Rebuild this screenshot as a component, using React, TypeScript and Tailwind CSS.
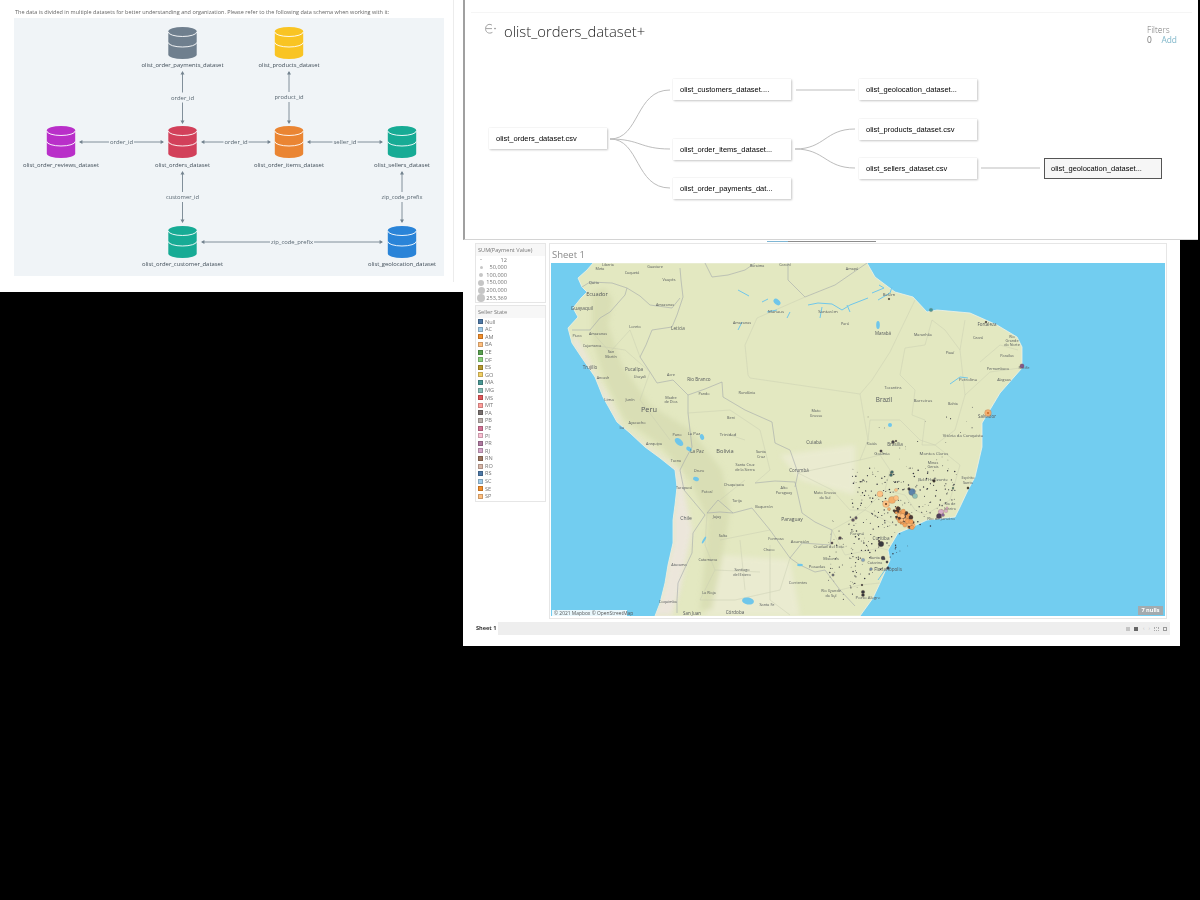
import React from "react";

const F = { fontFamily: '"Open Sans", "Liberation Sans", sans-serif' };

function Cyl({ cx, y, c }: { cx: number; y: number; c: string }) {
  const l = cx - 14.2, r = cx + 14.2;
  return (
    <g>
      <path d={`M${l} ${y + 4.5}A14.2 4.5 0 0 1 ${r} ${y + 4.5}V${y + 27.5}A14.2 4.5 0 0 1 ${l} ${y + 27.5}Z`} fill={c} />
      <path d={`M${l} ${y + 5}A14.2 4.5 0 0 0 ${r} ${y + 5}`} fill="none" stroke="#fff" strokeWidth="0.9" />
      <path d={`M${l} ${y + 15.5}A14.2 4.5 0 0 0 ${r} ${y + 15.5}`} fill="none" stroke="#fff" strokeWidth="0.9" />
    </g>
  );
}

function ArrowV({ x, y1, y2, label, ly, w }: { x: number; y1: number; y2: number; label: string; ly: number; w: number }) {
  return (
    <g>
      <line x1={x} y1={y1} x2={x} y2={y2} stroke="#74838f" strokeWidth="0.9" />
      <path d={`M${x} ${y1 - 1}l-2 3.4h4zM${x} ${y2 + 1}l-2 -3.4h4z`} fill="#74838f" />
      <rect x={x - w / 2 - 1} y={ly - 5} width={w + 2} height={10} fill="#f0f4f7" />
      <text x={x} y={ly + 2} textAnchor="middle" fontSize="6" fill="#56646f" textLength={w} lengthAdjust="spacingAndGlyphs">{label}</text>
    </g>
  );
}

function ArrowH({ y, x1, x2, label, lx, w }: { y: number; x1: number; x2: number; label: string; lx: number; w: number }) {
  return (
    <g>
      <line x1={x1} y1={y} x2={x2} y2={y} stroke="#74838f" strokeWidth="0.9" />
      <path d={`M${x1 - 1} ${y}l3.4 -2v4zM${x2 + 1} ${y}l-3.4 -2v4z`} fill="#74838f" />
      <rect x={lx - w / 2 - 1} y={y - 5} width={w + 2} height={10} fill="#f0f4f7" />
      <text x={lx} y={y + 2} textAnchor="middle" fontSize="6" fill="#56646f" textLength={w} lengthAdjust="spacingAndGlyphs">{label}</text>
    </g>
  );
}

const dbLabels: [number, number, string, number][] = [
  [182.5, 67, "olist_order_payments_dataset", 82],
  [289, 67, "olist_products_dataset", 61],
  [61, 167, "olist_order_reviews_dataset", 76],
  [182.5, 167, "olist_orders_dataset", 55],
  [289, 167, "olist_order_items_dataset", 70],
  [402, 167, "olist_sellers_dataset", 56],
  [182.5, 266, "olist_order_customer_dataset", 81],
  [402, 266, "olist_geolocation_dataset", 68],
];

function Schema() {
  return (
    <svg viewBox="14 18 430 258" className="block w-full h-full blur-[0.35px]" style={F}>
      <Cyl cx={182.5} y={27} c="#6f7f8e" />
      <Cyl cx={289} y={27} c="#f9c423" />
      <Cyl cx={61} y={126} c="#b92fc9" />
      <Cyl cx={182.5} y={126} c="#d2405a" />
      <Cyl cx={289} y={126} c="#ea8533" />
      <Cyl cx={402} y={126} c="#17ab95" />
      <Cyl cx={182.5} y={226} c="#17ab95" />
      <Cyl cx={402} y={226} c="#2a84d8" />
      <ArrowV x={182.5} y1={72} y2={123} label="order_id" ly={97.5} w={23} />
      <ArrowV x={289} y1={72} y2={123} label="product_id" ly={97} w={29} />
      <ArrowV x={182.5} y1={172} y2={222} label="customer_id" ly={197} w={33} />
      <ArrowV x={402} y1={172} y2={222} label="zip_code_prefix" ly={197} w={41} />
      <ArrowH y={142} x1={80} x2={163} label="order_id" lx={121.5} w={23} />
      <ArrowH y={142} x1={202} x2={270} label="order_id" lx={236} w={23} />
      <ArrowH y={142} x1={308} x2={382} label="seller_id" lx={345} w={23} />
      <ArrowH y={242} x1={202} x2={382} label="zip_code_prefix" lx={292} w={42} />
      {dbLabels.map(([x, y, t, w]) => (
        <text key={t} x={x} y={y} textAnchor="middle" fontSize="6" fontWeight="500" fill="#3f4c57" textLength={w} lengthAdjust="spacingAndGlyphs">{t}</text>
      ))}
    </svg>
  );
}

function Node({ t, x, y, active }: { t: string; x: number; y: number; active?: boolean }) {
  return (
    <div
      className={`absolute w-[118px] h-[21px] flex items-center text-[7.5px] text-black whitespace-nowrap overflow-hidden ${active ? "bg-[#f6f6f6] border border-[#555] pl-[6px]" : "bg-white pl-[7px] shadow-[1px_1px_2px_#c8c8c8,0_0_1px_#dddddd]"}`}
      style={{ left: x, top: y, fontFamily: '"Liberation Sans", sans-serif' }}
    >
      {t}
    </div>
  );
}

function DataSource() {
  return (
    <div className="absolute left-[463px] top-0 w-[735px] h-[240px] bg-white border-l-2 border-b border-[#a0a0a0] border-b-[#d4d4d4] blur-[0.3px]">
      <div className="mt-[12px] mx-[6px] border-t border-[#f5f5f5]" />
      <div className="flex items-start pl-[19px] pt-[9px]">
        <div className="w-[20px] flex items-center leading-[20px]">
          <svg width="14" height="14" viewBox="0 0 14 14" fill="none" stroke="#999" strokeWidth="0.9">
            <path d="M8 3.2C5.5 1.4 2 2.6 1.6 6.2 1.2 10 4.6 12.4 8.4 10.4M1.8 6.6H8" />
            <circle cx="11" cy="6.6" r="0.5" fill="#999" />
          </svg>
        </div>
        <div className="text-[14.8px] leading-[19px] font-light text-[#222] whitespace-nowrap" style={F}>olist_orders_dataset+</div>
        <div className="ml-auto mr-[21px] w-[30px] text-[8.4px] leading-[10px] text-[#777] pt-[3px]" style={F}>
          <div className="font-light">Filters</div>
          <div className="flex justify-between">
            <span>0</span>
            <span className="text-[#7fb6c9]">Add</span>
          </div>
        </div>
      </div>
      <svg className="absolute left-0 top-0 w-full h-full pointer-events-none" viewBox="465 0 733 239" fill="none" stroke="#bdbdbd" strokeWidth="1">
        <path d="M610 139C640 139 635 90 670 90M610 139C640 139 640 149 670 149M610 139C640 139 635 188 670 188" />
        <path d="M795 149C825 149 825 129 855 129M795 149C825 149 825 168 855 168" />
        <path d="M796 90H855M981 168H1040" />
      </svg>
      <Node t="olist_orders_dataset.csv" x={24} y={128} />
      <Node t="olist_customers_dataset...." x={208} y={79} />
      <Node t="olist_order_items_dataset..." x={208} y={139} />
      <Node t="olist_order_payments_dat..." x={208} y={178} />
      <Node t="olist_geolocation_dataset..." x={394} y={79} />
      <Node t="olist_products_dataset.csv" x={394} y={119} />
      <Node t="olist_sellers_dataset.csv" x={394} y={158} />
      <Node t="olist_geolocation_dataset..." x={579} y={158} active />
    </div>
  );
}

const sizes: [number, string][] = [[0.6, "12"], [1.5, "50,000"], [2.3, "100,000"], [3, "150,000"], [3.5, "200,000"], [4, "253,369"]];
const states: [string, string][] = [
  ["Null", "#4e79a7"], ["AC", "#a0cbe8"], ["AM", "#f28e2b"], ["BA", "#ffbe7d"], ["CE", "#59a14f"], ["DF", "#8cd17d"],
  ["ES", "#b6992d"], ["GO", "#f1ce63"], ["MA", "#499894"], ["MG", "#86bcb6"], ["MS", "#e15759"], ["MT", "#ff9d9a"],
  ["PA", "#79706e"], ["PB", "#bab0ac"], ["PE", "#d37295"], ["PI", "#fabfd2"], ["PR", "#b07aa1"], ["RJ", "#d4a6c8"],
  ["RN", "#9d7660"], ["RO", "#d7b5a6"], ["RS", "#4e79a7"], ["SC", "#a0cbe8"], ["SE", "#f28e2b"], ["SP", "#ffbe7d"],
];

function Legends() {
  return (
    <div className="w-[71px] flex flex-col gap-[2px] text-[5.6px] text-[#777] blur-[0.35px]" style={F}>
      <div className="h-[60px] border border-[#e6e6e6]">
        <div className="h-[12px] bg-[#f7f7f7] flex items-center pl-[2px] pt-[1px] whitespace-nowrap">SUM(Payment Value)</div>
        {sizes.map(([r, t]) => (
          <div key={t} className="flex items-center h-[7.6px]">
            <div className="w-[10px] flex justify-center">
              <span className="rounded-full bg-[#c6c6c6] shrink-0" style={{ width: r * 2, height: r * 2 }} />
            </div>
            <span className="w-[21px] text-right whitespace-nowrap">{t}</span>
          </div>
        ))}
      </div>
      <div className="h-[197px] border border-[#e6e6e6]">
        <div className="h-[12px] bg-[#f7f7f7] flex items-center pl-[2px]">Seller State</div>
        <div className="pl-[2px]">
          {states.map(([s, c]) => (
            <div key={s} className="flex items-center h-[7.6px] gap-[2px]">
              <span className="w-[5px] h-[5px] border border-[#00000033]" style={{ backgroundColor: c }} />
              <span>{s}</span>
            </div>
          ))}
        </div>
      </div>
    </div>
  );
}

const land = "M593 263L587 270 578 278 582 287 587 292 581 298 573 308 578 317 568 328 572 343 582 358 595 377 603 397 617 422 630 433 645 447 660 458 675 470 677 487 675 505 673 520 673 543 668 565 665 583 660 603 655 616H860L873 598 880 583 890 560 888 550 898 533 910 528 927 520 955 517 960 507 968 490 975 477 982 447 982 423 1000 393 1022 368 1022 347 1017 337 997 325 970 313 937 310 927 312 913 297 895 292 875 277 867 263Z";
const borders = [
  "M680 268L681 280 683 297 677 315 672 327 652 330 646 345 640 357 650 372 657 383 673 380 688 395 705 389 722 382 723 397 745 410 772 422 775 443 790 450 798 473 795 487",
  "M755 483L775 481 795 482 802 513 815 522 832 530 830 545 802 543 790 558 770 530 752 508 733 513 720 512 707 513",
  "M705 515L693 533 692 553 684 570 678 583 677 600 677 613",
  "M688 395L688 413 692 447 685 460 680 470 684 490 705 515",
  "M705 263L712 277 728 275 745 270 755 263M788 263L788 280 805 297 835 285 867 263",
  "M572 330L590 330 600 318 610 312 625 295 627 288 612 283 590 282 582 287M627 288L640 296 650 305 672 308 680 298",
  "M707 513L718 500 733 513M790 558L800 565 815 572 825 570 840 590 855 606",
];
const states2 = [
  "M745 345L757 318 805 297M745 345L748 375 750 378 798 385 860 394M798 473L860 460 868 440 860 394M860 394L872 380 890 352 915 300",
  "M905 348L900 375 915 390 912 415 925 420 922 445 935 445 955 430 965 395 960 350 945 330 932 320 925 345 905 348",
  "M960 350L965 320M980 362L1000 345 1018 350M965 395L990 372 1020 368",
  "M860 460L880 455 890 470 885 490 865 510 850 510 832 490 798 473M885 490L905 495 915 510 925 515 950 500 960 465 935 445 920 440 900 420 870 420 868 440",
  "M832 530L850 520 865 510 895 525M845 555L880 548 888 550M845 555L832 530M840 590L860 585 880 583",
  "M592 345L625 350 650 372 640 400 655 420 670 440M590 330L610 352 630 330 640 357M688 413L730 410 760 430 770 470 755 483M730 435L745 440M720 500L745 480",
  "M707 513L705 545 715 570 700 600 735 600 780 590 790 558M720 540L770 530M740 540L745 590M770 545L770 600 790 615M715 570L760 572",
];
const rivers = [
  "M808 305L818 303 832 304 842 310 850 305 868 298M822 307L820 318M847 305L850 312",
  "M742 322L738 330M767 312L777 310M790 312L787 318M738 290L749 296M762 302L768 299",
  "M872 293L884 288 879 285M878 300L890 293 892 287",
  "M950 384L960 377 968 378",
  "M885 570L878 580",
];
const lakes: [number, number, number, number, number][] = [
  [679, 442, 5, 3, 40], [689, 449, 3, 2, 30], [777, 302, 4, 2.5, 40], [702, 437, 2, 3, -20], [748, 601, 6, 3.5, 10], [696, 479, 3, 2, 20], [878, 325, 1.8, 4, 0], [890, 425, 2, 2, 0], [800, 565, 3, 1.2, 0], [704, 540, 1, 4, 30],
];

type L = [number, number, string, number?];
const names: L[] = [
  [600, 270, "Meta"], [608, 266, "Liberia"], [632, 274, "Caquetá"], [655, 268, "Guaviare"], [669, 281, "Vaupés"], [594, 284, "Quito", 4.8], [597, 296, "Ecuador", 6.6], [582, 310, "Guayaquil", 5.6],
  [665, 306, "Amazonas"], [635, 328, "Loreto"], [678, 330, "Leticia", 5.4], [742, 323.5, "Amazonas"], [776, 312.5, "Manaus", 5], [828, 312.5, "Santarém", 5], [845, 324.5, "Pará"], [757, 267, "Roraima"], [785, 266, "Caroní"], [852, 270, "Amapá"],
  [577, 337, "Piura"], [598, 335, "Amazonas"], [592, 347, "Cajamarca"], [611, 352.5, "San"], [611, 357.5, "Martín"], [590, 369, "Trujillo", 5.4], [634, 371, "Pucallpa", 5.4], [640, 378, "Ucayali"], [603, 379, "Ancash"],
  [671, 376, "Acre"], [699, 381, "Rio Branco", 5.4], [747, 394, "Rondônia"], [704, 395, "Pando"], [671, 398.5, "Madre"], [671, 402.5, "de Dios"], [630, 401, "Junín"], [609, 401, "Lima", 5], [649, 411.5, "Peru", 8.6],
  [637, 424, "Ayacucho"], [622, 429, "Ica"], [677, 436, "Puno"], [694, 435, "La Paz", 5], [728, 436, "Trinidad", 5], [731, 419, "Beni"], [816, 412, "Mato"], [816, 416.5, "Grosso"], [814, 444, "Cuiabá", 5.6], [725, 453, "Bolivia", 6.6], [697, 453, "La Paz", 5.4],
  [761, 452.5, "Santa"], [761, 457.5, "Cruz"], [745, 466, "Santa Cruz"], [745, 471, "de la Sierra"], [654, 445, "Arequipa"], [676, 462, "Tacna"], [699, 472, "Oruro"], [799, 472, "Corumbá", 5.2],
  [684, 489, "Tarapacá"], [707, 493, "Potosí"], [734, 486, "Chuquisaca"], [737, 502, "Tarija"], [764, 508, "Boquerón"], [784, 489, "Alto"], [784, 493.5, "Paraguay"], [825, 494, "Mato Grosso"], [825, 498.5, "do Sul"], [792, 521, "Paraguay", 5.8],
  [717, 518, "Jujuy"], [686, 520, "Chile", 5.8], [723, 537, "Salta"], [776, 540, "Formosa"], [800, 543, "Asunción", 5], [829, 548, "Ciudad del Este", 5], [857, 535, "Paraná", 5], [769, 551, "Chaco"], [831, 560, "Misiones"], [708, 561, "Catamarca"], [679, 566, "Atacama"], [817, 568, "Posadas", 5],
  [742, 571, "Santiago"], [742, 575.5, "del Estero"], [798, 584, "Corrientes"], [709, 594, "La Rioja"], [831, 592, "Rio Grande"], [831, 596.5, "do Sul"], [668, 603, "Coquimbo"], [767, 606, "Santa Fe"], [735, 614, "Córdoba", 5.4], [692, 615, "San Juan", 5.2],
  [889, 296, "Belém", 5], [923, 336, "Maranhão"], [883, 335, "Marabá", 5.2], [978, 339, "Ceará"], [987, 326, "Fortaleza", 5.2], [1012, 337.5, "Rio"], [1012, 341.5, "Grande"], [1012, 346, "do Norte"], [1007, 357, "Paraíba"], [950, 354, "Piauí"], [998, 370, "Pernambuco"], [1024, 369, "Recife", 4.6], [968, 381, "Petrolina", 5], [1004, 381, "Alagoas"], [893, 389, "Tocantins"], [884, 402, "Brazil", 7.4], [923, 402, "Barreiras", 5], [953, 405, "Bahia"], [987, 418, "Salvador", 5.2], [963, 437, "Vitória da Conquista", 5],
  [872, 445, "Goiás"], [895, 446, "Brasília", 5.4], [882, 455, "Goiânia", 5], [934, 455, "Montes Claros", 5], [933, 463.5, "Minas"], [933, 468, "Gerais"], [933, 481, "Belo Horizonte", 5], [968, 479, "Espírito"], [968, 483.5, "Santo"], [950, 505, "Rio de"], [950, 509.5, "Janeiro"], [881, 540, "Curitiba", 5.4], [875, 559, "Santa"], [875, 563.5, "Catarina"], [888, 571, "Florianópolis", 5.4], [941, 520, "Rio de Janeiro", 5], [868, 599, "Porto Alegre", 5],
];

function rng(seed: number) {
  let s = seed;
  return () => {
    s = (s * 1664525 + 1013904223) % 4294967296;
    return s / 4294967296;
  };
}
const r = rng(7);
const scatter: [number, number, number][] = [];
for (let i = 0; i < 380; i++) {
  const x = 850 + r() * 110;
  const y = 468 + r() * 120;
  if (x + (y - 468) * 0.9 < 985 && x - 850 < 165 - (y - 468) * 1.3) scatter.push([x, y, 0.3 + r() * 0.5]);
}
for (let i = 0; i < 40; i++) scatter.push([828 + r() * 28, 520 + r() * 80, 0.3 + r() * 0.4]);
for (let i = 0; i < 25; i++) scatter.push([865 + r() * 110, 400 + r() * 70, 0.25 + r() * 0.3]);
const spPalette = ["#ffbe7d", "#f5a25a", "#ffbe7d", "#f5a25a", "#4a3a35", "#4a3a35"];
const sp: [number, number, number, string][] = [];
for (let i = 0; i < 110; i++) {
  const a = r() * Math.PI * 2, d = r() * 10;
  sp.push([904 + Math.cos(a) * d + Math.sin(a) * d * 0.2, 518 + Math.sin(a) * d * 0.9 + Math.cos(a) * d * 0.5, 0.8 + r() * 1.7, spPalette[Math.floor(r() * 6)]]);
}
const big: [number, number, number, string][] = [
  [880, 494, 3, "#ffbe7d"], [886, 504, 3.4, "#ffbe7d"], [892, 500, 3.6, "#f5a860"], [896, 498, 2.6, "#ffbe7d"], [889, 509, 1.6, "#f5a860"], [912, 492, 3.4, "#4e79a7"], [915, 496, 2.6, "#86bcb6"], [896, 490, 1.6, "#ffbe7d"],
  [941, 512, 2.8, "#d4a6c8"], [946, 511, 1.8, "#d4a6c8"], [939, 516, 2.6, "#3b2a4a"], [943, 515, 1.6, "#7d5a99"], [947, 508, 1.2, "#d4a6c8"], [881, 544, 2.8, "#262530"], [879, 541, 1, "#262530"], [863, 560, 1.8, "#7a9dbf"], [871, 569, 1.5, "#6c89a8"], [883, 558, 2, "#30323f"], [887, 562, 1.2, "#30323f"], [888, 568, 1.5, "#30323f"],
  [988, 413, 3.4, "#f6a865"], [1022, 366, 2.2, "#7b4a80"], [931, 310, 1.8, "#3f8f8e"], [893, 442, 1.6, "#33333d"], [896, 441, 1, "#33333d"], [881, 451, 1.3, "#33333d"], [892, 472, 1.6, "#2f5d63"], [891, 475, 1.6, "#2f5d63"], [986, 322, 1, "#222"], [889, 299, 0.9, "#222"], [863, 592, 1.8, "#23232c"], [863, 595, 1.6, "#23232c"], [862, 585, 1, "#23232c"],
  [856, 518, 1.4, "#50485a"], [853, 520, 1.6, "#50485a"], [840, 538, 1.6, "#3e3946"], [832, 543, 1.2, "#3e3946"], [833, 575, 1.3, "#5c6472"], [909, 489, 1.4, "#2e2e38"], [934, 481, 1.4, "#222"], [953, 488, 1, "#3a6a5e"], [968, 488, 1.2, "#2a2a1e"],
];

function MapView() {
  return (
    <svg viewBox="551 263 614 353" className="block w-full h-full blur-[0.35px]" preserveAspectRatio="none" style={F}>
      <defs>
        <clipPath id="landClip"><path d={land} /></clipPath>
        <filter id="soft" x="-20%" y="-20%" width="140%" height="140%"><feGaussianBlur stdDeviation="2.5" /></filter>
      </defs>
      <rect x="551" y="263" width="614" height="353" fill="#72cdf0" />
      <path d={land} fill="#e3e8c1" stroke="#f0f3e6" strokeWidth="0.8" />
      <g clipPath="url(#landClip)">
        <g filter="url(#soft)">
          <path d="M720 555L790 560 800 616H705ZM780 455L855 445 855 495 800 480Z" fill="#eaebd0" />
          <path d="M592 292L605 288 613 300 608 325 622 365 650 405 690 430 722 470 730 510 722 560 712 610 700 610 705 560 708 520 690 480 660 445 625 420 605 380 592 340Z" fill="#d6dbb0" opacity="0.75" />
        </g>
        <path d="M575 335L585 352 598 378 610 400 622 425 650 447 680 470 684 490 688 510 692 530 686 560 680 590 672 616H650L660 603 665 583 668 565 673 543 673 520 675 505 677 487 675 470 660 458 645 447 630 433 617 422 603 397 595 377 582 358 572 343Z" fill="#ece6dd" filter="url(#soft)" opacity="0.95" />
      </g>
      <g fill="none" stroke="#c8ccb0" strokeWidth="0.45">
        {states2.map((d, i) => <path key={i} d={d} />)}
      </g>
      <g fill="none" stroke="#a2a8ab" strokeWidth="0.6">
        {borders.map((d, i) => <path key={i} d={d} />)}
      </g>
      <g fill="none" stroke="#6fc6ea" strokeWidth="1">
        {rivers.map((d, i) => <path key={i} d={d} />)}
      </g>
      <g fill="#6fc6ea">
        {lakes.map(([x, y, a, b, t], i) => <ellipse key={i} cx={x} cy={y} rx={a} ry={b} transform={`rotate(${t} ${x} ${y})`} />)}
      </g>
      <g fill="#55595c" textAnchor="middle">
        {names.map(([x, y, t, s], i) => <text key={i} x={x} y={y} fontSize={(s ?? 4.4) * 0.86}>{t}</text>)}
      </g>
      <g fill="#33333d">
        {scatter.map(([x, y, s], i) => <circle key={i} cx={x} cy={y} r={s} />)}
      </g>
      {big.map(([x, y, s, c], i) => <circle key={i} cx={x} cy={y} r={s} fill={c} fillOpacity="0.9" stroke="#7a5a40" strokeOpacity="0.45" strokeWidth="0.4" />)}
      {sp.map(([x, y, s, c], i) => <circle key={i} cx={x} cy={y} r={s} fill={c} stroke="#6b4a2e" strokeOpacity="0.5" strokeWidth="0.3" />)}
      <circle cx="988" cy="413" r="1" fill="#c96a22" />
      <circle cx="886" cy="504" r="1" fill="#5c3a1e" />
    </svg>
  );
}

function Tableau() {
  return (
    <div className="absolute left-[463px] top-[240px] w-[717px] h-[406px] bg-white flex flex-col">
      <div className="h-[1px] mt-[1px] flex pl-[304px]">
        <div className="w-[21px] bg-[#7fb6d4]" />
        <div className="w-[88px] bg-[#8d8d8d]" />
      </div>
      <div className="flex gap-[3px] pl-[12px] pt-[1px]">
        <Legends />
        <div className="relative w-[618px] h-[376px] border border-[#e6e6e6] flex flex-col px-[1px] pb-[2px]">
          <div className="h-[19px] shrink-0 flex items-center pl-[1px] pt-[3px] text-[9.5px] text-[#8a8a8a] blur-[0.3px]" style={F}>Sheet 1</div>
          <div className="relative flex-1 min-h-0">
            <MapView />
            <div className="absolute left-[1px] bottom-0 h-[6px] w-[75px] bg-[#ffffffd9] text-[4.9px] leading-[6px] text-[#555] pl-[2px] whitespace-nowrap blur-[0.25px]" style={F}>© 2021 Mapbox © OpenStreetMap</div>
            <div className="absolute right-[2px] bottom-[1px] w-[25px] h-[9px] bg-[#a3abaf] text-white text-[5.6px] font-bold leading-[9px] text-center blur-[0.2px]" style={F}>7 nulls</div>
          </div>
        </div>
      </div>
      <div className="mt-[3px] h-[13px] flex items-stretch pr-[10px]" style={F}>
        <div className="w-[35px] pl-[13px] flex items-center text-[5.6px] font-bold text-[#333] whitespace-nowrap blur-[0.25px]">Sheet 1</div>
        <div className="flex-1 bg-[#eeeeee] flex items-center justify-end gap-[4px] pr-[3px]">
          <span className="w-[4px] h-[4px] bg-[#c4c4c4]" />
          <span className="w-[4px] h-[4px] bg-[#666] mr-[1px]" />
          <span className="text-[5px] leading-none text-[#bbb]">‹</span>
          <span className="text-[5px] leading-none text-[#bbb]">›</span>
          <span className="w-[5px] h-[4px] border border-dotted border-[#aaa]" />
          <span className="w-[4px] h-[4px] border border-[#999]" />
        </div>
      </div>
    </div>
  );
}

function Kaggle() {
  return (
    <div className="absolute left-0 top-0 w-[463px] h-[292px] bg-white">
      <div className="w-[454px] h-[282px] border-r border-[#ececec] pl-[14px]">
        <div className="h-[2px] overflow-hidden ml-[1px]">
          <div className="text-[9px] font-semibold text-[#555] leading-[8px] -mt-[7px]" style={F}>Data Schema</div>
        </div>
        <div className="h-[16px] pl-[1px] pt-[7px] text-[5.5px] leading-[6px] text-[#666] whitespace-nowrap blur-[0.3px]" style={F}>
          The data is divided in multiple datasets for better understanding and organization. Please refer to the following data schema when working with it:
        </div>
        <div className="w-[430px] h-[258px] bg-[#f0f4f7]">
          <Schema />
        </div>
      </div>
    </div>
  );
}

export default function App() {
  return (
    <div className="relative w-[1200px] h-[900px] bg-black overflow-hidden">
      <Kaggle />
      <Tableau />
      <DataSource />
    </div>
  );
}
